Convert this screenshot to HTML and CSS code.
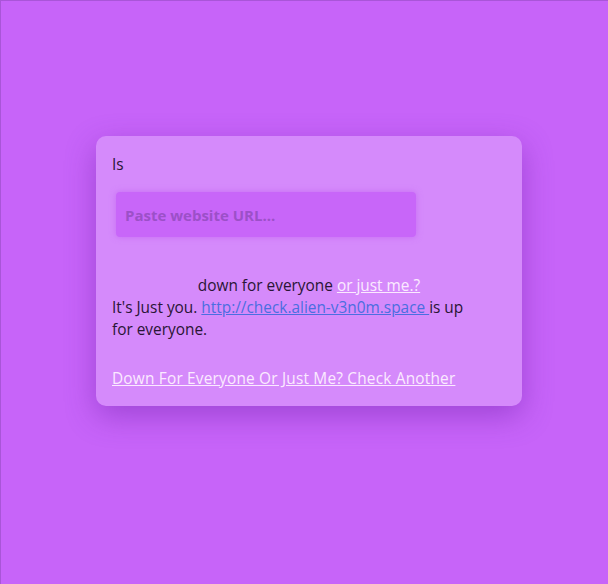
FILE: index.html
```html
<!DOCTYPE html>
<html>
<head>
<meta charset="utf-8">
<link rel="stylesheet" href="styles.css">
</head>
<body>
<div class="frame">
  <div class="card">
    <div class="is">Is</div>
    <div class="field"><input class="url" type="text" placeholder="Paste website URL..."></div>
    <div class="question">down for everyone <a class="light" href="#">or just me.?</a></div>
    <p class="result">It's Just you. <a class="site" href="#">http://check.alien-v3n0m.space </a>is up for everyone.</p>
    <a class="light another" href="#">Down For Everyone Or Just Me? Check Another</a>
  </div>
</div>
</body>
</html>
```
FILE: styles.css
```css
html, body {
  margin: 0;
  padding: 0;
  height: 100%;
}
body {
  background: #c764f9;
  font-family: "Open Sans", "DejaVu Sans", sans-serif;
  font-size: 15.4px;
  color: #2a1535;
}
.frame {
  min-height: 100%;
  box-sizing: border-box;
  border-top: 1px solid #a955d8;
  border-left: 1px solid #a955d8;
  padding-top: 135px;
}
.card {
  width: 426px;
  box-sizing: border-box;
  margin: 0 auto 0 95px;
  background: #d58afb;
  border-radius: 10px;
  padding: 14px 16px 16px;
  box-shadow: 0 10px 30px rgba(110, 30, 170, 0.45);
  line-height: 22px;
}
.is {
  line-height: 26px;
  padding-top: 2px;
}
.field {
  padding: 14px 4px 0;
}
.url {
  display: block;
  width: 300px;
  height: 45px;
  box-sizing: border-box;
  border: none;
  border-radius: 4px;
  background: #c866f9;
  box-shadow: 0 0 6px rgba(190, 90, 240, 0.6);
  padding: 0 9px;
  font-family: inherit;
  font-size: 15px;
  font-weight: 700;
  color: #6a2a8a;
  outline: none;
}
.url::placeholder {
  color: #9c50c8;
}
.question {
  text-align: center;
  margin-top: 38px;
}
.light {
  color: #fbeaff;
}
.site {
  color: #4b6ee0;
}
.result {
  margin: 0 0 27px;
  max-width: 370px;
}
.another {
  display: block;
  letter-spacing: 0.2px;
}
```
